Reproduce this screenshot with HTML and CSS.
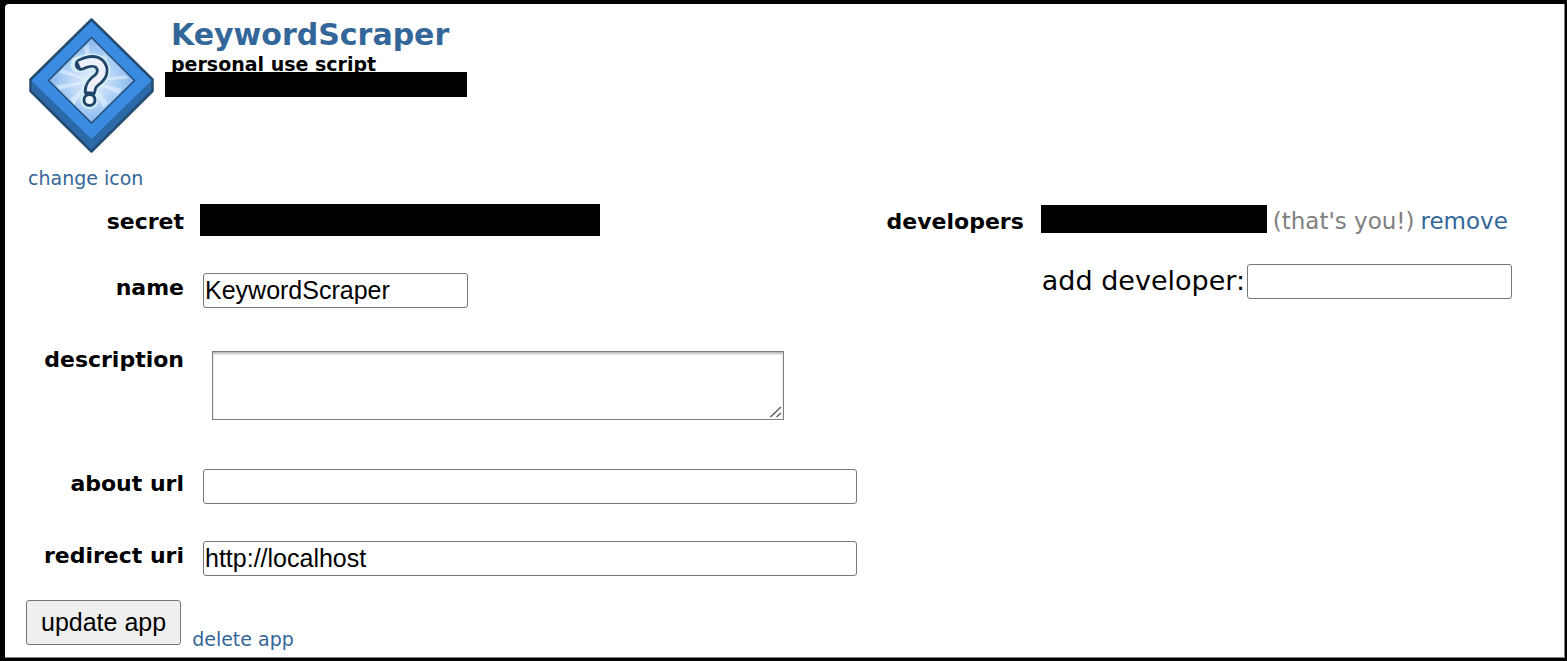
FILE: index.html
```html
<!DOCTYPE html>
<html lang="en">
<head>
<meta charset="utf-8">
<title>KeywordScraper</title>
<link rel="stylesheet" href="styles.css">
</head>
<body>
<main class="panel">
  <header class="app-header">
    <div class="app-icon">
      <svg class="icon" viewBox="28 18 126 136" aria-hidden="true">
        <defs>
          <radialGradient id="glass" cx="91" cy="81" r="40" gradientUnits="userSpaceOnUse">
            <stop offset="0" stop-color="#e6f1fc"/>
            <stop offset=".5" stop-color="#bcd8f6"/>
            <stop offset="1" stop-color="#8abaf0"/>
          </radialGradient>
        </defs>
        <path d="M91.500 19.500 152.500 80V91L91.500 151.500 30.500 91V80Z" fill="#2c69a9"/>
        <path d="M91.500 20 152.500 80 148 84 91.500 139 35 84 30.500 80Z" fill="#3a8ce2"/>
        <path d="M91.500 19.500 152.500 79.500V91L91.500 151.500 30.500 91V79.500Z" fill="none" stroke="#234c73" stroke-width="2.500" stroke-linejoin="round"/>
        <path d="M91.500 37.500 134.500 80.500 91.500 123 48.500 80.500Z" fill="url(#glass)" stroke="#234c73" stroke-width="1.500"/>
        <g fill="#f2f8ff" opacity=".5">
          <path d="M91 81 84 48 89 44Z"/><path d="M91 81 104 54 108 58Z"/>
          <path d="M91 81 125 75 129 79Z"/><path d="M91 81 122 89 118 94Z"/>
          <path d="M91 81 108 103 103 108Z"/><path d="M91 81 74 105 70 99Z"/>
          <path d="M91 81 60 90 56 85Z"/><path d="M91 81 59 73 63 69Z"/>
        </g>
        <g fill="none" stroke-linejoin="round">
          <path d="M78.500 64.500C86 61 95 60 99.500 64 104 69 102.500 75 98 79 92 83 90.500 86 90 93" stroke="#d5eef5" stroke-width="16" stroke-linecap="round"/>
          <circle cx="89.500" cy="100" r="9" fill="#d5eef5"/>
          <path d="M81 64.500C88 61 95 60 99.500 64 104 69 102.500 75 98 79 92 83 90.500 86 90 91" stroke="#1f4569" stroke-width="12.500" stroke-linecap="round"/>
          <circle cx="89.500" cy="100" r="5.500" fill="#f4f6fd" stroke="#1f4569" stroke-width="3"/>
          <path d="M79.500 65C88 61 95 60 99.500 64 104 69 102.500 75 98 79 92 83 90.500 86 90 91.500" stroke="#eef1fb" stroke-width="7"/>
        </g>
      </svg>
      <a class="small-link" href="#icon">change icon</a>
    </div>
    <div class="app-title">
      <h1><a href="#app">KeywordScraper</a></h1>
      <h2>personal use script</h2>
      <div class="redacted redacted-id"></div>
    </div>
  </header>

  <form class="edit-form">
    <div class="columns">
      <div class="fields">
        <span class="field-label">secret</span>
        <div class="redacted redacted-secret"></div>

        <label class="field-label" for="name">name</label>
        <input class="text-box" id="name" type="text" value="KeywordScraper">

        <label class="field-label" for="description">description</label>
        <textarea class="description" id="description"></textarea>

        <label class="field-label" for="about">about url</label>
        <input class="text-box wide" id="about" type="text">

        <label class="field-label" for="redirect">redirect uri</label>
        <input class="text-box wide" id="redirect" type="text" value="http://localhost">
      </div>

      <section class="developers">
        <span class="field-label">developers</span>
        <div class="developer-list">
          <div class="developer">
            <div class="redacted redacted-user"></div>
            <span class="you">(that's you!)</span>
            <a href="#remove">remove</a>
          </div>
          <div class="add-developer">
            <label for="developer">add developer:</label>
            <input class="text-box" id="developer" type="text">
          </div>
        </div>
      </section>
    </div>

    <div class="actions">
      <button class="update" type="button">update app</button>
      <a class="small-link" href="#delete">delete app</a>
    </div>
  </form>
</main>
</body>
</html>
```
FILE: styles.css
```css
* {
  box-sizing: border-box;
}

body {
  display: flex;
  min-height: 100vh;
  margin: 0;
  padding: 4px 2px 3px 5px;
  background: #000;
  color: #000;
  font-family: Verdana, "DejaVu Sans", sans-serif;
}

a {
  color: #336699;
  text-decoration: none;
}

.panel {
  flex: 1;
  padding: 14px 52px 6px 21px;
  border: solid #808080;
  border-width: 0 1px 1px 0;
  border-top-left-radius: 4px;
  background: #fff;
}

.app-header {
  display: flex;
  gap: 17px;
  padding-left: 2px;
}

.app-icon {
  display: flex;
  flex-direction: column;
  gap: 12px;
  width: 126px;
}

.icon {
  display: block;
  width: 126px;
  height: 136px;
}

.small-link {
  font-size: 19px;
  line-height: 24px;
}

.app-title h1 {
  margin: 0;
  font-size: 30px;
  line-height: 34px;
}

.app-title h2 {
  margin: 0;
  font-size: 19px;
  line-height: 24px;
}

.redacted {
  background: #000;
}

.redacted-id {
  position: relative;
  width: 302px;
  height: 25px;
  margin: -4px 0 0 -6px;
}

.edit-form {
  margin-top: 14px;
}

.columns {
  display: flex;
  align-items: flex-start;
  justify-content: space-between;
}

.fields {
  display: grid;
  grid-template-columns: 158px auto;
  gap: 34px 16px;
  justify-items: start;
  align-items: start;
}

.field-label {
  justify-self: end;
  padding-top: 4px;
  font-size: 22px;
  font-weight: bold;
  line-height: 28px;
  white-space: nowrap;
}

.redacted-secret {
  width: 400px;
  height: 32px;
}

.text-box {
  width: 265px;
  height: 35px;
  margin: 0;
  padding: 1px;
  border: 1px solid #767676;
  border-radius: 3px;
  background: #fff;
  color: #000;
  font-family: "Liberation Sans", Arial, sans-serif;
  font-size: 25px;
}

.fields .text-box {
  margin: 3px 0 0 3px;
}

.fields .wide {
  width: 654px;
}

.description {
  width: 572px;
  height: 69px;
  margin: 9px 0 12px 12px;
  padding: 4px;
  border: 1px solid #808080;
  background: #fff;
  box-shadow: inset 0 2px 2px #bbb;
  font-family: "Liberation Sans", Arial, sans-serif;
  font-size: 25px;
  resize: both;
}

.description::-webkit-resizer {
  background: url("data:image/svg+xml,%3Csvg xmlns='http://www.w3.org/2000/svg' width='15' height='15'%3E%3Cpath d='M2.500 13 13 3M8.500 13 13 9' stroke='%23606060' stroke-width='1.500'/%3E%3C/svg%3E") no-repeat;
}

.developers {
  display: flex;
  gap: 17px;
}

.developer-list {
  padding-top: 1px;
}

.developer {
  display: flex;
  gap: 6px;
  font-size: 23px;
  line-height: 32px;
}

.redacted-user {
  width: 226px;
  height: 28px;
}

.you {
  color: #808080;
}

.add-developer {
  display: flex;
  gap: 2px;
  margin: 27px 0 0 1px;
  font-size: 27px;
  line-height: 33px;
}

.actions {
  display: flex;
  align-items: flex-end;
  gap: 11px;
  margin-top: 24px;
}

.update {
  height: 45px;
  margin: 0 0 6px;
  padding: 0 14px;
  border: 1px solid #767676;
  border-radius: 3px;
  background: #efefef;
  color: #000;
  font-family: "Liberation Sans", Arial, sans-serif;
  font-size: 25px;
}
```
